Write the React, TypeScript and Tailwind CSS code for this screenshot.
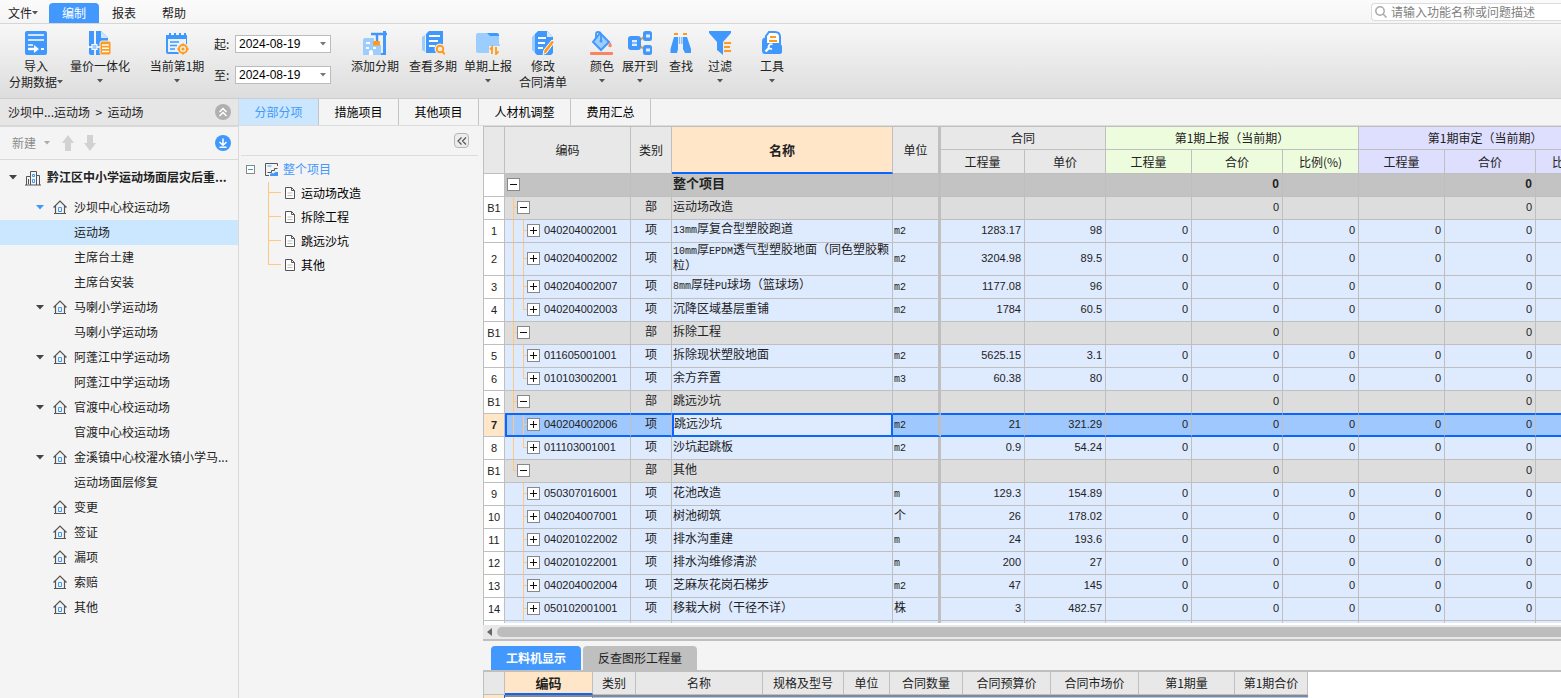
import { useState, type ReactNode } from "react";

const NUM = "font-['Liberation_Sans','Noto_Sans_CJK_SC',sans-serif] text-[11px]";

/* ---------- Ribbon icons ---------- */

const BLUE = "#4098fc";
const PALE = "#9ccdff";
const ORANGE = "#ff9a1a";

function Glyph({ children }: { children: ReactNode }) {
  return (
    <svg viewBox="0 0 24 24" className="block h-6 w-6" fill="none" aria-hidden="true">
      {children}
    </svg>
  );
}

const icons = {
  importData: (
    <Glyph>
      <rect x="1" width="22" height="24" rx="2" fill={BLUE} />
      <path d="M4 4h16M4 9h16M4 14h5" stroke="#fff" strokeWidth="1.6" />
      <path d="M4 18h7" stroke="#fff" strokeWidth="2.4" />
      <path d="M10 14l5 4-5 4z" fill="#fff" />
      <path d="M17 18h3" stroke="#fff" strokeWidth="2" />
    </Glyph>
  ),
  integrate: (
    <Glyph>
      <path d="M1 0h5v24H3a2 2 0 0 1-2-2z" fill={BLUE} />
      <path d="M8 0h5v24H8z" fill={BLUE} />
      <path d="M13 0l7 7v4h-7z" fill={BLUE} />
      <path d="M13 0l7 7h-7z" fill="#cfe6ff" />
      <path d="M0 16h12" stroke="#fff" strokeWidth="1.6" />
      <rect x="4" y="13.5" width="5" height="5" fill={PALE} stroke="#fff" />
      <rect x="12" y="10" width="11" height="14" rx="2" fill={ORANGE} stroke="#eee" />
      <path d="M14 14h7M14 17.300h7M14 20.500h7" stroke="#fff" strokeWidth="1.4" />
    </Glyph>
  ),
  calendar: (
    <Glyph>
      <path d="M2 4h20v17a2 2 0 0 1-2 2H3a2 2 0 0 1-2-2V4z" fill={BLUE} />
      <path d="M5 2v4M10 2v4M15 2v4M20 2v4" stroke={BLUE} strokeWidth="2" />
      <path d="M3 8h18v13H3z" fill="#e6f2ff" />
      <path d="M5 11h9M5 14.500h7M5 18h5" stroke={BLUE} strokeWidth="1.700" />
      <circle cx="18" cy="18" r="6" fill="#eee" />
      <circle cx="18" cy="18" r="4" stroke={ORANGE} strokeWidth="2" />
      <circle cx="18" cy="18" r="1.600" fill={ORANGE} />
      <path d="M18 12.500v2M18 21.500v2M12.500 18h2M21.500 18h2" stroke={ORANGE} strokeWidth="2" />
    </Glyph>
  ),
  addPeriod: (
    <Glyph>
      <path d="M0 9a2 2 0 0 1 2-2h9v7h7v10H0z" fill={PALE} />
      <path d="M3 12h4M3 17h3M10 17h3" stroke="#fff" strokeWidth="2" />
      <path d="M6 24v-3a2 2 0 0 1 4 0v3z" fill="#fff" />
      <path d="M8 3h16M14 3v7" stroke={BLUE} strokeWidth="2.400" />
      <path d="M20 0h3v24h-5v-2h2z" fill={BLUE} />
      <rect x="10" y="10" width="7" height="4.500" rx="1" fill={ORANGE} />
    </Glyph>
  ),
  viewPeriods: (
    <Glyph>
      <path d="M4 4L1 6v13l3 2z" fill={PALE} />
      <path d="M8 0h14v22H5V3z" fill={BLUE} />
      <path d="M8 5h11M8 10h9M8 15h6" stroke="#fff" strokeWidth="1.800" />
      <circle cx="19" cy="18" r="5.500" fill="#eee" />
      <circle cx="19" cy="18" r="3.300" stroke={ORANGE} strokeWidth="1.900" />
      <path d="M21.300 20.300l2.500 3" stroke={ORANGE} strokeWidth="2" />
    </Glyph>
  ),
  submit: (
    <Glyph>
      <path d="M11 2h10a2 2 0 0 1 2 2v4H11z" fill={BLUE} />
      <path d="M0 4a2 2 0 0 1 2-2h9l3 3h9v8a2 2 0 0 1-2 9H2a2 2 0 0 1-2-2z" fill={PALE} />
      <rect x="13" y="15" width="11" height="9" fill="#eee" />
      <path d="M16 23v-7l-2 2.500M20 16v7l2.500-2.500" stroke={ORANGE} strokeWidth="1.800" />
    </Glyph>
  ),
  edit: (
    <Glyph>
      <path d="M4 3L1 6v13l3 3z" fill={PALE} />
      <path d="M7 0h9l6 6v16l-2 2H6l-2-2V3z" fill={BLUE} />
      <path d="M16 0l6 6h-6z" fill="#d9ecff" />
      <path d="M7 7h8M7 12h7M7 17h5" stroke="#fff" strokeWidth="1.800" />
      <path d="M21 9l2.500 2-8 11-3.500 1.500L13 19z" fill={ORANGE} stroke="#fff" strokeWidth="1" />
    </Glyph>
  ),
  color: (
    <Glyph>
      <path d="M10 2l9 9-8 8-8-8z" fill={PALE} stroke={BLUE} strokeWidth="2" />
      <path d="M6 7V3q0-2 2-2t3 2v6" stroke={BLUE} strokeWidth="1.800" />
      <circle cx="11" cy="10" r="1.500" fill={BLUE} />
      <path d="M20 11q2.500 3 1.500 4.500-1.500 1.500-3 0Q18 14 20 11z" fill="#fa8360" />
      <rect y="21" width="23" height="3" rx="1" fill="#fa8360" />
    </Glyph>
  ),
  expand: (
    <Glyph>
      <path d="M11 10l6-5M11 14l6 5" stroke={ORANGE} strokeWidth="2" />
      <rect y="5" width="13" height="14" rx="3" fill={BLUE} />
      <path d="M4 9h5v6H4z" fill="#dcedff" />
      <path d="M4 12h5" stroke={BLUE} strokeWidth="1.200" />
      <rect x="15" width="9" height="10" rx="2.500" fill={BLUE} />
      <rect x="15" y="14" width="9" height="10" rx="2.500" fill={BLUE} />
      <path d="M18 3.500h4v3h-4zM18 17.500h4v3h-4z" fill="#dcedff" />
    </Glyph>
  ),
  find: (
    <Glyph>
      <path d="M5 3h4M14 3h4" stroke={ORANGE} strokeWidth="2" />
      <path d="M5 6h4v12l-1 4H1.500V18z" fill={BLUE} />
      <path d="M14 6h4l4 12v4h-6l-2-4z" fill={BLUE} />
      <path d="M10.500 6v7M12.800 6v7" stroke="#75b6ff" strokeWidth="1.300" />
    </Glyph>
  ),
  filter: (
    <Glyph>
      <path d="M1 0h22v2l-8 9v13l-6-5v-8L1 2z" fill={BLUE} />
      <path d="M15 11h9v11h-9z" fill="#ececec" />
      <path d="M16 12h7M16 16h6M16 20h7" stroke={ORANGE} strokeWidth="2" />
    </Glyph>
  ),
  tools: (
    <Glyph>
      <path d="M9 1h6q5 0 5 5v7H6V5z" fill="#fff" stroke={BLUE} strokeWidth="2" />
      <path d="M10 6h6M9 10h8" stroke={ORANGE} strokeWidth="2" />
      <path d="M2 10q0-3 4-4v7h13q3 0 3 3v5q0 2-2 2H5q-3 0-3-3z" fill={BLUE} />
      <path d="M5.500 20.500l4-4" stroke="#fff" strokeWidth="2.400" />
      <path d="M12.500 13.500q-2-1-3.300.5t0 3 2.800.500" stroke="#fff" strokeWidth="1.800" />
    </Glyph>
  ),
};

function Caret({ className = "text-[#555]" }: { className?: string }) {
  return (
    <svg viewBox="0 0 6 4" className={`h-1 w-1.5 shrink-0 ${className}`} aria-hidden="true">
      <path d="M0 0h6L3 3.500z" fill="currentColor" />
    </svg>
  );
}

type ToolProps = { icon: ReactNode; label: string; second?: string; caret?: boolean; className: string };

function Tool({ icon, label, second, caret, className }: ToolProps) {
  return (
    <button type="button" className={`flex shrink-0 flex-col items-center pt-[7px] ${className}`}>
      {icon}
      <span className="mt-[3px] h-4 whitespace-nowrap leading-4">{label}</span>
      {second ? (
        <span className="flex h-4 items-center whitespace-nowrap leading-4">
          {second}
          {caret && <Caret />}
        </span>
      ) : (
        caret && <Caret className="mt-[5px] text-[#555]" />
      )}
    </button>
  );
}

function DateField({ id, label }: { id: string; label: string }) {
  return (
    <div className="flex items-center">
      <label htmlFor={id} className="w-[21px]">
        {label}
      </label>
      <div className="relative">
        <select
          id={id}
          className="block h-[18px] w-24 appearance-none border border-[#bcbcbc] bg-white pl-[3px] font-['Liberation_Sans',sans-serif] text-xs leading-4 text-black"
        >
          <option>2024-08-19</option>
        </select>
        <span className="pointer-events-none absolute right-[5px] top-0 flex h-full items-center">
          <Caret className="text-[#777]" />
        </span>
      </div>
    </div>
  );
}

function Ribbon() {
  return (
    <header className="shrink-0">
      <div className="flex h-6 items-end border-b border-[#d6d6d6] bg-gradient-to-b from-[#fbfbfb] to-[#f5f5f5]">
        <nav className="flex h-5 items-center">
          <button type="button" className="flex w-[49px] items-center pl-2">
            文件
            <Caret />
          </button>
          <button type="button" className="h-5 w-[50px] rounded-t bg-[#4398fe] text-white">
            编制
          </button>
          <button type="button" className="w-[50px]">
            报表
          </button>
          <button type="button" className="w-[50px]">
            帮助
          </button>
        </nav>
        <label className="mb-0.5 ml-auto flex h-[18px] w-[190px] items-center rounded-l border border-r-0 border-[#dcdcdc] bg-white pl-[3px]">
          <svg viewBox="0 0 12 12" className="h-3 w-3 shrink-0" fill="none" stroke="#aaa" strokeWidth="1.500">
            <circle cx="5" cy="5" r="4.200" />
            <path d="M8 8l3.500 3.500" />
          </svg>
          <input
            type="search"
            aria-label="搜索"
            placeholder="请输入功能名称或问题描述"
            className="ml-1 w-full min-w-0 bg-transparent text-xs outline-none placeholder:text-[#808080]"
          />
        </label>
      </div>

      <div className="flex h-[75px] items-start border-b border-[#cdcdcd] bg-gradient-to-b from-[#f7f7f7] to-[#dddddd] pl-2">
        <Tool icon={icons.importData} label="导入" second="分期数据" caret className="w-14" />
        <Tool icon={icons.integrate} label="量价一体化" caret className="w-[72px]" />
        <Tool icon={icons.calendar} label="当前第1期" caret className="ml-1 w-[74px]" />
        <div className="flex flex-col gap-[13px] pt-[11px]">
          <DateField id="from" label="起:" />
          <DateField id="to" label="至:" />
        </div>
        <Tool icon={icons.addPeriod} label="添加分期" className="ml-[15px] w-[58px]" />
        <Tool icon={icons.viewPeriods} label="查看多期" className="w-[58px]" />
        <Tool icon={icons.submit} label="单期上报" caret className="w-[52px]" />
        <Tool icon={icons.edit} label="修改" second="合同清单" className="w-[58px]" />
        <Tool icon={icons.color} label="颜色" caret className="ml-[14px] w-8" />
        <Tool icon={icons.expand} label="展开到" caret className="w-11" />
        <Tool icon={icons.find} label="查找" className="w-[38px]" />
        <Tool icon={icons.filter} label="过滤" caret className="w-10" />
        <Tool icon={icons.tools} label="工具" caret className="ml-3 w-10" />
      </div>
    </header>
  );
}

/* ---------- Project tree ---------- */

type Node = { label: string; kind: "house" | "leaf"; open?: boolean; selected?: boolean };

const projectTree: Node[] = [
  { label: "沙坝中心校运动场", kind: "house", open: true },
  { label: "运动场", kind: "leaf", selected: true },
  { label: "主席台土建", kind: "leaf" },
  { label: "主席台安装", kind: "leaf" },
  { label: "马喇小学运动场", kind: "house", open: true },
  { label: "马喇小学运动场", kind: "leaf" },
  { label: "阿蓬江中学运动场", kind: "house", open: true },
  { label: "阿蓬江中学运动场", kind: "leaf" },
  { label: "官渡中心校运动场", kind: "house", open: true },
  { label: "官渡中心校运动场", kind: "leaf" },
  { label: "金溪镇中心校濯水镇小学马...", kind: "house", open: true },
  { label: "运动场面层修复", kind: "leaf" },
  { label: "变更", kind: "house" },
  { label: "签证", kind: "house" },
  { label: "漏项", kind: "house" },
  { label: "索赔", kind: "house" },
  { label: "其他", kind: "house" },
];

function TreeArrow({ className }: { className: string }) {
  return (
    <svg viewBox="0 0 8 5" className={`h-[5px] w-2 shrink-0 ${className}`} aria-hidden="true">
      <path d="M0 0h8L4 4.500z" fill="currentColor" />
    </svg>
  );
}

function House() {
  return (
    <svg viewBox="0 0 14 14" className="mb-px h-3.5 w-3.5 shrink-0" fill="none" stroke="#555" aria-hidden="true">
      <path d="M.5 7.500L7 1l6.500 6.500M2.500 6v7.500M11.500 6v7.500M1 13.500h12" strokeWidth="1.200" />
      <path d="M5.500 7.500h3v4h-3z" stroke={BLUE} />
    </svg>
  );
}

function Sidebar() {
  return (
    <aside className="flex w-[239px] shrink-0 flex-col border-r border-[#d9d9d9]">
      <div className="flex h-[28px] items-center justify-between border-b-2 border-[#d8d8d8] bg-[#e6e6e6] pl-2 pr-[7px]">
        <span>沙坝中...运动场&nbsp; &gt; &nbsp;运动场</span>
        <button type="button" aria-label="收起">
          <svg viewBox="0 0 16 16" className="block h-4 w-4" fill="none">
            <circle cx="8" cy="8" r="8" fill="#b0b0b0" />
            <path d="M4.500 8L8 4.500 11.500 8M4.500 12L8 8.500l3.500 3.500" stroke="#fff" strokeWidth="1.500" />
          </svg>
        </button>
      </div>
      <div className="flex h-[33px] items-center border-b border-[#d9d9d9] pl-3 pr-[7px]">
        <button type="button" className="flex items-center gap-2 text-[#8c8c8c]">
          新建
          <Caret className="text-[#aaa]" />
        </button>
        <button type="button" aria-label="上移" className="ml-3">
          <svg viewBox="0 0 12 16" className="block h-4 w-3" fill="#d2d2d2">
            <path d="M6 0l6 8H9v8H3V8H0z" />
          </svg>
        </button>
        <button type="button" aria-label="下移" className="ml-2.5">
          <svg viewBox="0 0 12 16" className="block h-4 w-3" fill="#d2d2d2">
            <path d="M6 16l6-8H9V0H3v8H0z" />
          </svg>
        </button>
        <button type="button" aria-label="下载" className="ml-auto">
          <svg viewBox="0 0 16 16" className="block h-4 w-4" fill="none" stroke="#fff" strokeWidth="1.500">
            <circle cx="8" cy="8" r="8" fill={BLUE} stroke="none" />
            <path d="M8 3.500v6.500M4.500 7L8 10.200 11.500 7M4.500 12.200h7" />
          </svg>
        </button>
      </div>
      <ul>
        <li className="flex h-[35px] items-center pl-[9px] font-bold">
          <TreeArrow className="text-[#444]" />
          <svg viewBox="0 0 16 16" className="ml-2 h-4 w-4 shrink-0" fill="none" stroke="#555">
            <path d="M5.500 15V1.500h6V15M1.500 15V6.500h4M11.500 5.500h3V15M0 15h16M3.500 9v5" />
            <path d="M7.500 4.500h2v2h-2zM7.500 9.500h2v3h-2z" stroke={BLUE} />
          </svg>
          <span className="ml-1.5 whitespace-nowrap pb-0.5">黔江区中小学运动场面层灾后重...</span>
        </li>
        {projectTree.map((node, i) => (
          <li
            key={i}
            className={`flex h-[25px] items-center whitespace-nowrap ${node.selected ? "bg-[#cbe7ff]" : ""}`}
          >
            {node.kind === "leaf" ? (
              <span className="pb-0.5 pl-[74px]">{node.label}</span>
            ) : (
              <>
                <span className="flex w-[53px] justify-end pr-[9px]">
                  {node.open && <TreeArrow className={i === 0 ? "text-[#4098fc]" : "text-[#444]"} />}
                </span>
                <House />
                <span className="ml-[7px] pb-0.5">{node.label}</span>
              </>
            )}
          </li>
        ))}
      </ul>
    </aside>
  );
}

/* ---------- Section outline ---------- */

function Outline() {
  const sections = ["运动场改造", "拆除工程", "跳远沙坑", "其他"];
  return (
    <section className="w-[244px] shrink-0 pl-0.5 pr-[5px]">
      <div className="flex h-[30px] items-center justify-end border-b border-[#dcdcdc] pr-[9px]">
        <button
          type="button"
          aria-label="折叠"
          className="flex h-[15px] w-[15px] items-center justify-center rounded-sm border border-[#b5b5b5] bg-[#ececec]"
        >
          <svg viewBox="0 0 10 8" className="h-2 w-2.5" fill="none" stroke="#555" strokeWidth="1.200">
            <path d="M4.500 .5L1 4l3.500 3.500M9 .5L5.500 4 9 7.500" />
          </svg>
        </button>
      </div>
      <div className="flex h-[26px] items-center pl-[5px] text-[#4398fe]">
        <span className="flex h-[9px] w-[9px] items-center justify-center border border-[#888] bg-white">
          <span className="h-px w-[5px] bg-[#2aa5c8]" />
        </span>
        <svg viewBox="0 0 13 13" className="ml-2.5 h-[13px] w-[13px]" fill="none" stroke="#555">
          <path d="M12.500 3V.5H.5v12H4M2.500 9.500h4v-2h3v-2h3" />
          <path d="M5 12.500V11l2-1 1.500.500 2-1.500H13v4H5z" fill={BLUE} stroke="none" />
          <path d="M2.500 3h4" stroke={PALE} strokeWidth="2" />
        </svg>
        <span className="ml-[5px]">整个项目</span>
      </div>
      <ul className="pl-[27px]">
        {sections.map((name, i) => (
          <li key={name} className="flex h-6 items-center">
            <span className="flex h-full w-[13px] flex-col">
              <span className="h-[11px] border-b border-l border-[#ffc881]" />
              {i < sections.length - 1 && <span className="flex-1 border-l border-[#ffc881]" />}
            </span>
            <svg viewBox="0 0 10 12" className="mb-0.5 ml-1 h-3 w-2.5" fill="#fff" stroke="#555">
              <path d="M.5.500h6l3 3v8h-9zM6.500.500v3h3" />
              <path d="M2.500 6h5M2.500 8.500h5" stroke="#bbb" />
            </svg>
            <span className="ml-1.5 pb-0.5 text-black">{name}</span>
          </li>
        ))}
      </ul>
    </section>
  );
}

/* ---------- Bill of quantities grid ---------- */

type Row = {
  no: string;
  type: "root" | "part" | "item";
  code?: string;
  name: string;
  unit?: string;
  qty?: string;
  price?: string;
};

const rows: Row[] = [
  { no: "", type: "root", name: "整个项目" },
  { no: "B1", type: "part", name: "运动场改造" },
  { no: "1", type: "item", code: "040204002001", name: "13mm厚复合型塑胶跑道", unit: "m2", qty: "1283.17", price: "98" },
  { no: "2", type: "item", code: "040204002002", name: "10mm厚EPDM透气型塑胶地面（同色塑胶颗粒）", unit: "m2", qty: "3204.98", price: "89.5" },
  { no: "3", type: "item", code: "040204002007", name: "8mm厚硅PU球场（篮球场）", unit: "m2", qty: "1177.08", price: "96" },
  { no: "4", type: "item", code: "040204002003", name: "沉降区域基层重铺", unit: "m2", qty: "1784", price: "60.5" },
  { no: "B1", type: "part", name: "拆除工程" },
  { no: "5", type: "item", code: "011605001001", name: "拆除现状塑胶地面", unit: "m2", qty: "5625.15", price: "3.1" },
  { no: "6", type: "item", code: "010103002001", name: "余方弃置", unit: "m3", qty: "60.38", price: "80" },
  { no: "B1", type: "part", name: "跳远沙坑" },
  { no: "7", type: "item", code: "040204002006", name: "跳远沙坑", unit: "m2", qty: "21", price: "321.29" },
  { no: "8", type: "item", code: "011103001001", name: "沙坑起跳板", unit: "m2", qty: "0.9", price: "54.24" },
  { no: "B1", type: "part", name: "其他" },
  { no: "9", type: "item", code: "050307016001", name: "花池改造", unit: "m", qty: "129.3", price: "154.89" },
  { no: "10", type: "item", code: "040204007001", name: "树池砌筑", unit: "个", qty: "26", price: "178.02" },
  { no: "11", type: "item", code: "040201022002", name: "排水沟重建", unit: "m", qty: "24", price: "193.6" },
  { no: "12", type: "item", code: "040201022001", name: "排水沟维修清淤", unit: "m", qty: "200", price: "27" },
  { no: "13", type: "item", code: "040204002004", name: "芝麻灰花岗石梯步", unit: "m2", qty: "47", price: "145" },
  { no: "14", type: "item", code: "050102001001", name: "移栽大树（干径不详）", unit: "株", qty: "3", price: "482.57" },
];

const SELECTED = "7";
const lastPart = rows.map((r) => r.type).lastIndexOf("part");

// Latin runs are set in a narrow mono face so they take half a CJK cell each.
function Mixed({ text }: { text: string }) {
  return text.split(/([A-Za-z0-9]+)/).map((part, i) =>
    i % 2 ? (
      <span key={i} className="font-['Liberation_Mono',monospace] text-[10px]">
        {part}
      </span>
    ) : (
      part
    )
  );
}

function Toggle({ plus }: { plus?: boolean }) {
  return (
    <button
      type="button"
      aria-label={plus ? "展开" : "折叠"}
      className="mb-px flex h-[13px] w-[13px] shrink-0 items-center justify-center border border-[#888] bg-white"
    >
      <svg viewBox="0 0 7 7" className="h-[7px] w-[7px]" stroke="#111">
        <path d={plus ? "M0 3.500h7M3.500 0v7" : "M0 3.500h7"} />
      </svg>
    </button>
  );
}

function Branch({ end }: { end: boolean }) {
  return (
    <span className="flex w-1 flex-col self-stretch">
      <span className="h-1/2 border-b border-l border-[#ffc881]" />
      {!end && <span className="flex-1 border-l border-[#ffc881]" />}
    </span>
  );
}

function CodeCell({ row, index }: { row: Row; index: number }) {
  const next = rows[index + 1];
  if (row.type === "root") {
    return (
      <div className="flex h-[22px] items-center pl-0.5">
        <Toggle />
      </div>
    );
  }
  if (row.type === "part") {
    return (
      <div className="flex h-[22px] items-center pl-2">
        <Branch end={index === lastPart} />
        <Toggle />
      </div>
    );
  }
  return (
    <div
      className={`flex items-center pl-2 ${row.no === "2" ? "h-8" : row.no === SELECTED ? "h-5" : "h-[22px]"}`}
    >
      <span className={`w-2.5 self-stretch ${index < lastPart ? "border-l border-[#ffc881]" : ""}`} />
      <Branch end={next?.type === "part"} />
      <Toggle plus />
      <span className={`ml-1 pb-0.5 ${NUM}`}>{row.code}</span>
    </div>
  );
}

const rowTone = {
  root: "bg-[#c3c3c3] font-bold",
  part: "bg-[#dddddd]",
  item: "bg-[#deeafe]",
};

const LINE = "border-r border-b border-[#bfbfbf]";

function GridRow({ row, index }: { row: Row; index: number }) {
  const active = row.no === SELECTED;
  const aboveActive = rows[index + 1]?.no === SELECTED;
  const item = row.type === "item";
  const tone = active ? "bg-[#9fc8fe]" : rowTone[row.type];
  // The selection frame is 2px: its upper pixel belongs to the row above.
  const edge = active
    ? "border-r border-t border-b-2 border-r-[#bfbfbf] border-y-[#0a66ff]"
    : aboveActive
      ? "border-r border-b border-r-[#bfbfbf] border-b-[#0a66ff]"
      : LINE;
  const cell = `${edge} ${tone}`;
  const text = `${cell} pb-0.5`;
  const num = `${text} ${row.type === "root" ? "text-xs" : ""} pr-[3px] text-right`;
  const zero = item ? "0" : "";
  return (
    <tr className={row.no === "2" ? "h-[33px]" : "h-[23px]"}>
      <td className={`${LINE} text-center ${NUM} ${active ? "bg-[#ffe6c8] font-bold" : "bg-white"}`}>{row.no}</td>
      <td className={`${cell} ${active ? "border-l-2 border-l-[#0a66ff] [&>div]:-ml-0.5" : ""} text-xs`}>
        <CodeCell row={row} index={index} />
      </td>
      <td className={`${text} text-center text-xs`}>{row.type === "part" ? "部" : item ? "项" : ""}</td>
      <td
        className={
          active
            ? "border-2 border-t border-[#0a66ff] bg-[#deeafe] pb-0.5 text-xs"
            : `${text} pl-px ${row.type === "root" ? "text-[13px] leading-[14px]" : "text-xs leading-[14px]"}`
        }
      >
        <Mixed text={row.name} />
      </td>
      <td className={`${text} border-r-[3px] pl-px text-xs`}>
        <Mixed text={row.unit ?? ""} />
      </td>
      <td className={num}>{row.qty}</td>
      <td className={num}>{row.price}</td>
      <td className={num}>{zero}</td>
      <td className={num}>0</td>
      <td className={num}>{zero}</td>
      <td className={num}>{zero}</td>
      <td className={num}>0</td>
      <td className={num}>{zero}</td>
    </tr>
  );
}

function BillGrid() {
  const head = `${LINE} text-xs font-normal`;
  const gray = `${head} bg-[#e8e8e8]`;
  const green = `${head} bg-[#eefcde]`;
  const violet = `${head} bg-[#dedefe]`;
  return (
    <div className="min-h-0 flex-1 overflow-hidden border-l border-t border-[#bfbfbf] bg-white">
      <table className={`w-[1128px] table-fixed border-separate border-spacing-0 ${NUM}`}>
        <colgroup>
          <col className="w-[21px]" />
          <col className="w-[126px]" />
          <col className="w-[41px]" />
          <col className="w-[221px]" />
          <col className="w-12" />
          <col className="w-[84px]" />
          <col className="w-[81px]" />
          <col className="w-[86px]" />
          <col className="w-[91px]" />
          <col className="w-[76px]" />
          <col className="w-[86px]" />
          <col className="w-[91px]" />
          <col className="w-[76px]" />
        </colgroup>
        <thead className="font-['Noto_Sans_CJK_SC',sans-serif]">
          <tr className="h-[23px]">
            <th rowSpan={2} className={gray} />
            <th rowSpan={2} className={gray}>编码</th>
            <th rowSpan={2} className={gray}>类别</th>
            <th rowSpan={2} className="border-b-2 border-r border-b-[#0a66ff] border-r-[#bfbfbf] bg-[#ffe6c8] text-[13px] font-bold">
              名称
            </th>
            <th rowSpan={2} className={`${gray} border-r-[3px]`}>单位</th>
            <th colSpan={2} className={gray}>合同</th>
            <th colSpan={3} className={green}>第1期上报（当前期）</th>
            <th colSpan={3} className={violet}>第1期审定（当前期）</th>
          </tr>
          <tr className="h-6">
            <th className={gray}>工程量</th>
            <th className={gray}>单价</th>
            <th className={green}>工程量</th>
            <th className={green}>合价</th>
            <th className={green}>比例(%)</th>
            <th className={violet}>工程量</th>
            <th className={violet}>合价</th>
            <th className={violet}>比例(%)</th>
          </tr>
        </thead>
        <tbody>
          {rows.map((row, i) => (
            <GridRow key={i} row={row} index={i} />
          ))}
          <tr className="h-0.5">
            {Array.from({ length: 13 }, (_, i) => (
              <td
                key={i}
                className={`border-r border-[#bfbfbf] ${i === 0 ? "bg-white" : "bg-[#deeafe]"} ${i === 4 ? "border-r-[3px]" : ""}`}
              />
            ))}
          </tr>
        </tbody>
      </table>
    </div>
  );
}

/* ---------- Resource panel under the grid ---------- */

function ResourcePanel() {
  const [tab, setTab] = useState(0);
  const cols = ["类别", "名称", "规格及型号", "单位", "合同数量", "合同预算价", "合同市场价", "第1期量", "第1期合价"];
  return (
    <section className="shrink-0 overflow-hidden border-t-2 border-[#bfbfbf]">
      <div className="flex gap-0.5 border-b-2 border-[#bfbfbf] pl-2 pt-[5px]">
        {["工料机显示", "反查图形工程量"].map((label, i) => (
          <button
            key={label}
            type="button"
            onClick={() => setTab(i)}
            className={`h-6 rounded-t-sm ${i === 0 ? "w-[90px]" : "w-[114px]"} ${
              tab === i ? "bg-[#4398fe] font-bold text-white" : "bg-[#bfbfbf]"
            }`}
          >
            {label}
          </button>
        ))}
      </div>
      <div className="bg-white">
        <table className="w-[825px] table-fixed border-separate border-spacing-0 border-l border-[#bfbfbf] text-xs">
          <colgroup>
            <col className="w-[21px]" />
            <col className="w-[88px]" />
            <col className="w-[43px]" />
            <col className="w-[127px]" />
            <col className="w-[81px]" />
            <col className="w-[46px]" />
            <col className="w-[73px]" />
            <col className="w-[88px]" />
            <col className="w-[88px]" />
            <col className="w-24" />
            <col className="w-[73px]" />
          </colgroup>
          <thead>
            <tr className="h-[23px]">
              <th className={`${LINE} bg-[#e8e8e8]`} />
              <th className="border-b-2 border-r border-b-[#0a66ff] border-r-[#bfbfbf] bg-[#ffe6c8] text-[13px] font-bold">
                编码
              </th>
              {cols.map((c) => (
                <th key={c} className={`${LINE} bg-[#e8e8e8] font-normal`}>
                  {c}
                </th>
              ))}
            </tr>
          </thead>
          <tbody>
            <tr className="h-[3px]">
              <td className="border-r border-[#0a66ff] bg-[#ffe6c8]" />
              <td className="border-r border-t-2 border-[#888] bg-white" />
              {cols.map((c) => (
                <td key={c} className="border-t-2 border-[#888] bg-[#9fc8fe]" />
              ))}
            </tr>
          </tbody>
        </table>
      </div>
    </section>
  );
}

function MainTabs() {
  const [active, setActive] = useState(0);
  return (
    <div className="flex h-[27px] shrink-0 border-b border-[#dcdcdc]">
      {["分部分项", "措施项目", "其他项目", "人材机调整", "费用汇总"].map((label, i) => (
        <button
          key={label}
          type="button"
          onClick={() => setActive(i)}
          className={`border-r border-[#c4c4c4] ${i === 3 ? "w-[92px]" : "w-20"} ${
            active === i ? "bg-[#cbe7ff] text-[#4398fe]" : "text-black"
          }`}
        >
          {label}
        </button>
      ))}
    </div>
  );
}

export default function App() {
  return (
    <div className="flex h-screen flex-col overflow-hidden bg-[#f4f4f4] font-['Noto_Sans_CJK_SC',sans-serif] text-xs text-[#222]">
      <Ribbon />
      <div className="flex min-h-0 flex-1">
        <Sidebar />
        <main className="flex min-w-0 flex-1 flex-col">
          <MainTabs />
          <div className="flex min-h-0 flex-1">
            <Outline />
            <div className="flex min-w-0 flex-1 flex-col">
              <BillGrid />
              <div className="flex h-3.5 shrink-0 items-center bg-[#e8e8e8] pl-1">
                <svg viewBox="0 0 5 8" className="h-2 w-[5px]" fill="#666">
                  <path d="M5 0v8L0 4z" />
                </svg>
                <div className="ml-[5px] h-2.5 flex-1 rounded-l-full bg-[#bdbdbd]" />
              </div>
              <ResourcePanel />
            </div>
          </div>
        </main>
      </div>
    </div>
  );
}
